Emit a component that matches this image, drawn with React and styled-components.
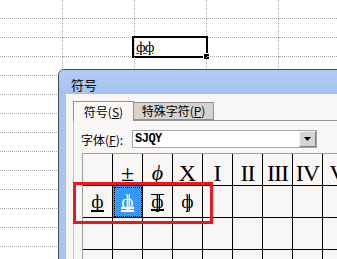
import React from 'react';
import styled, { createGlobalStyle } from 'styled-components';

const Global = createGlobalStyle`
  html, body { margin: 0; padding: 0; background: #fff; overflow: hidden; }
  body { width: 337px; height: 259px; font-family: "Noto Sans CJK SC", "Liberation Sans", sans-serif; }
`;

const Screen = styled.div`
  position: relative;
  width: 337px;
  height: 259px;
  overflow: hidden;
  background: #fff;
`;

const Sheet = styled.div`
  display: grid;
  grid-template-columns: 63px repeat(4, 72px);
  grid-auto-rows: 19px;
`;

const SheetCell = styled.div`
  position: relative;
  box-sizing: border-box;
  border-right: 1px dotted #a9a9a9;
  border-bottom: 1px dotted #a9a9a9;
  font-family: "Liberation Serif", serif;
  font-size: 15px;
  line-height: 18px;
  padding-left: 1px;
  color: #000;
`;

const CellText = styled.span`
  text-decoration: underline;
  text-decoration-color: #1a55c8;
  letter-spacing: -1px;
`;

const Selection = styled.div`
  position: absolute;
  left: -3px;
  top: -2px;
  width: 76px;
  height: 22px;
  box-sizing: border-box;
  border: 2px solid #000;
  pointer-events: none;
`;

const FillHandle = styled.div`
  position: absolute;
  right: -3px;
  bottom: -3px;
  width: 5px;
  height: 5px;
  background: #000;
  border-left: 1px solid #fff;
  border-top: 1px solid #fff;
`;

const Dialog = styled.div`
  position: absolute;
  left: 58px;
  top: 69px;
  width: 300px;
  height: 210px;
  box-sizing: border-box;
  border: 1px solid #4a4a4a;
  border-radius: 6px 6px 0 0;
  background: #a8c4f0;
  display: flex;
  flex-direction: column;
  overflow: hidden;
`;

const TitleBar = styled.div`
  height: 29px;
  padding: 5px 0 0 12px;
  box-sizing: border-box;
  display: flex;
  align-items: center;
  font-size: 13px;
  color: #000;
  background: linear-gradient(#b3ccf3, #a5c1ef);
`;

const Frame = styled.div`
  flex: 1;
  padding-left: 7px;
  display: flex;
`;

const Body = styled.div`
  flex: 1;
  background: #f9f6f6;
  padding: 7px 0 0 7px;
  display: flex;
  flex-direction: column;
`;

const Tabs = styled.div`
  display: flex;
  align-items: flex-end;
  height: 19px;
  position: relative;
  z-index: 1;
`;

const Tab = styled.div`
  box-sizing: border-box;
  width: ${p => p.$w}px;
  height: ${p => (p.$active ? 20 : 18)}px;
  margin-bottom: ${p => (p.$active ? -1 : 0)}px;
  border: 1px solid #8d9296;
  border-left-width: ${p => (p.$active ? 1 : 0)}px;
  border-bottom-width: ${p => (p.$active ? 0 : 1)}px;
  background: ${p => (p.$active ? '#f9f6f6' : '#d6d3ce')};
  font-size: 12px;
  line-height: 1;
  display: flex;
  align-items: center;
  justify-content: center;
  color: #000;
  padding-top: ${p => (p.$active ? 1 : 0)}px;
`;

const Key = styled.span`
  text-decoration: underline;
`;

const Panel = styled.div`
  flex: 1;
  border-top: 1px solid #8d9296;
  border-left: 1px solid #c3c6c9;
  padding: 9px 0 0 7px;
`;

const FontRow = styled.div`
  display: flex;
  align-items: center;
  height: 18px;
`;

const Label = styled.div`
  width: 51px;
  font-size: 12px;
  color: #000;
  white-space: nowrap;
`;

const Combo = styled.div`
  box-sizing: border-box;
  width: 185px;
  height: 18px;
  border: 1px solid #a3a6aa;
  background: #fff;
  display: flex;
  align-items: center;
  justify-content: space-between;
  padding-left: 2px;
`;

const ComboText = styled.span`
  font-family: "Liberation Mono", monospace;
  font-size: 12px;
  font-weight: bold;
  letter-spacing: -0.5px;
  color: #000;
`;

const DropButton = styled.div`
  box-sizing: border-box;
  width: 17px;
  height: 16px;
  background: #d4d4d4;
  border: 1px solid #f4f4f4;
  border-right-color: #808080;
  border-bottom-color: #808080;
  display: flex;
  align-items: center;
  justify-content: center;
`;

const Grid = styled.div`
  position: relative;
  margin: 5px 0 0 1px;
  display: grid;
  grid-template-columns: repeat(9, 30px);
  grid-auto-rows: 32px;
  border-left: 1px solid #a0a0a0;
  border-top: 1px solid #a0a0a0;
`;

const GridCell = styled.div`
  box-sizing: border-box;
  border-right: 1px solid #000;
  border-bottom: 1px solid #000;
  display: flex;
  align-items: center;
  justify-content: center;
  background: ${p => (p.$selected ? '#3399ff' : 'transparent')};
  outline: ${p => (p.$selected ? '1px dotted #000' : 'none')};
  outline-offset: -2px;
  font-family: "Liberation Serif", "DejaVu Serif", serif;
  font-size: 24px;
  line-height: 1;
  color: #000;
  padding-top: ${p => p.$shift || 0}px;
`;

const Roman = styled.span`
  letter-spacing: -1px;
`;

const Phi = styled.span`
  font-style: italic;
  font-size: 22px;
`;

const Rebar = styled.span`
  position: relative;
  display: inline-block;
  font-family: "Liberation Serif", serif;
  font-size: 19px;
  line-height: 20px;
  height: 20px;
  color: ${p => (p.$inverse ? '#fff' : '#000')};
`;

const Bar = styled.span`
  position: absolute;
  left: 0;
  right: 0;
  height: 1.5px;
  background: currentColor;
  ${p => (p.$top !== undefined ? `top: ${p.$top}px;` : `bottom: ${p.$bottom}px;`)}
`;

const Stem = styled.span`
  position: absolute;
  left: 50%;
  margin-left: 1px;
  top: 2px;
  bottom: 1px;
  width: 1px;
  background: currentColor;
`;

const Highlight = styled.div`
  position: absolute;
  left: -10px;
  top: 28px;
  width: 140px;
  height: 42px;
  box-sizing: border-box;
  border: 3px solid #e5191f;
  pointer-events: none;
`;

const row1 = ['', '±', 'ϕ', 'X', 'I', 'II', 'III', 'IV', 'V'];

function RebarGlyph({ variant, inverse }) {
  return (
    <Rebar $inverse={inverse}>
      ф
      {variant === 'a' && <Bar $bottom={0} />}
      {variant === 'b' && (
        <>
          <Stem />
          <Bar $bottom={3} />
          <Bar $bottom={0} />
        </>
      )}
      {variant === 'c' && (
        <>
          <Stem />
          <Bar $top={2} />
          <Bar $bottom={1} />
        </>
      )}
      {variant === 'd' && <Stem />}
    </Rebar>
  );
}

const row2 = [
  { v: 'a' },
  { v: 'b', selected: true },
  { v: 'c' },
  { v: 'd' },
];

export default function App() {
  const sheetCells = [];
  for (let r = 0; r < 14; r++) {
    for (let c = 0; c < 5; c++) {
      const isSel = r === 2 && c === 2;
      sheetCells.push(
        <SheetCell key={`${r}-${c}`}>
          {isSel && (
            <>
              <CellText>фф</CellText>
              <Selection>
                <FillHandle />
              </Selection>
            </>
          )}
        </SheetCell>
      );
    }
  }

  const gridCells = [];
  row1.forEach((ch, i) => {
    let content = ch;
    if (i >= 5) content = <Roman>{ch}</Roman>;
    if (i === 2) content = <Phi>{ch}</Phi>;
    gridCells.push(
      <GridCell key={`r1-${i}`} $shift={6}>{content}</GridCell>
    );
  });
  for (let i = 0; i < 9; i++) {
    const item = row2[i];
    gridCells.push(
      <GridCell key={`r2-${i}`} $selected={item && item.selected}>
        {item && <RebarGlyph variant={item.v} inverse={item.selected} />}
      </GridCell>
    );
  }
  for (let i = 0; i < 18; i++) {
    gridCells.push(<GridCell key={`r3-${i}`} />);
  }

  return (
    <Screen>
      <Global />
      <Sheet>{sheetCells}</Sheet>
      <Dialog>
        <TitleBar>符号</TitleBar>
        <Frame>
          <Body>
            <Tabs>
              <Tab $active $w={61}>
                符号(<Key>S</Key>)
              </Tab>
              <Tab $w={80}>
                特殊字符(<Key>P</Key>)
              </Tab>
            </Tabs>
            <Panel>
              <FontRow>
                <Label>
                  字体(<Key>F</Key>):
                </Label>
                <Combo>
                  <ComboText>SJQY</ComboText>
                  <DropButton>
                    <svg width="7" height="4" viewBox="0 0 7 4">
                      <path d="M0 0h7L3.5 4z" fill="#000" />
                    </svg>
                  </DropButton>
                </Combo>
              </FontRow>
              <Grid>
                {gridCells}
                <Highlight />
              </Grid>
            </Panel>
          </Body>
        </Frame>
      </Dialog>
    </Screen>
  );
}
